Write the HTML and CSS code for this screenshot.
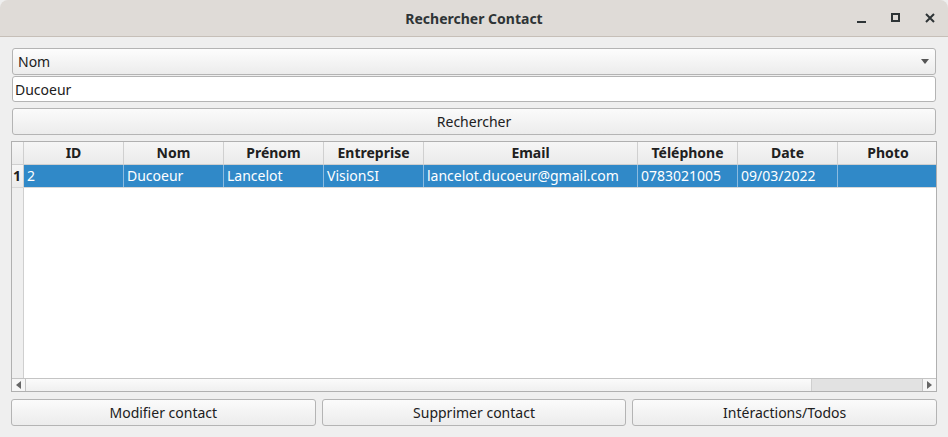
FILE: index.html
```html
<!DOCTYPE html>
<html>
<head>
<meta charset="utf-8">
<link rel="stylesheet" href="styles.css">
</head>
<body>
<div class="window">
  <div class="titlebar">
    <div class="title">Rechercher Contact</div>
    <div class="controls">
      <svg width="12" height="12" viewBox="0 0 12 12"><rect x="1" y="9" width="9" height="2" fill="#2e3436"/></svg>
      <svg width="12" height="12" viewBox="0 0 12 12"><rect x="2" y="2" width="7" height="7" fill="none" stroke="#2e3436" stroke-width="2"/></svg>
      <svg width="12" height="12" viewBox="0 0 12 12"><path d="M2 2 L10 10 M10 2 L2 10" stroke="#2e3436" stroke-width="2"/></svg>
    </div>
  </div>
  <div class="content">
    <div class="combo"><span>Nom</span><svg width="8" height="5" viewBox="0 0 8 5"><path d="M0 0 H8 L4 5 Z" fill="#555"/></svg></div>
    <div class="input">Ducoeur</div>
    <div class="btn search">Rechercher</div>
    <div class="table">
      <div class="thead">
        <div class="corner"></div>
        <div class="th w100">ID</div>
        <div class="th w100">Nom</div>
        <div class="th w100">Prénom</div>
        <div class="th w100">Entreprise</div>
        <div class="th w214">Email</div>
        <div class="th w100">Téléphone</div>
        <div class="th w100">Date</div>
        <div class="th w100 last">Photo</div>
      </div>
      <div class="row">
        <div class="rh">1</div>
        <div class="td w100">2</div>
        <div class="td w100">Ducoeur</div>
        <div class="td w100">Lancelot</div>
        <div class="td w100">VisionSI</div>
        <div class="td w214">lancelot.ducoeur@gmail.com</div>
        <div class="td w100">0783021005</div>
        <div class="td w100">09/03/2022</div>
        <div class="td w100 last"></div>
      </div>
      <div class="empty">
        <div class="rhcol"></div>
        <div class="area"></div>
      </div>
      <div class="hscroll">
        <div class="arrow"><svg width="5" height="8" viewBox="0 0 5 8"><path d="M5 0 V8 L0 4 Z" fill="#666"/></svg></div>
        <div class="track"></div>
        <div class="handle"></div>
        <div class="arrow right"><svg width="5" height="8" viewBox="0 0 5 8"><path d="M0 0 V8 L5 4 Z" fill="#666"/></svg></div>
      </div>
    </div>
    <div class="actions">
      <div class="btn">Modifier contact</div>
      <div class="btn">Supprimer contact</div>
      <div class="btn">Intéractions/Todos</div>
    </div>
  </div>
</div>
</body>
</html>
```
FILE: styles.css
```css
* { box-sizing: border-box; }
html, body { margin: 0; padding: 0; background: #efefef; }
body {
  font-family: "Noto Sans", "Open Sans", sans-serif;
  font-size: 14px;
  color: #202020;
  width: 948px;
  height: 437px;
  overflow: hidden;
}
.window {
  width: 948px;
  height: 437px;
  background: #efefef;
  border-radius: 8px 8px 0 0;
  overflow: hidden;
}
.titlebar {
  height: 37px;
  background: #dfdbd7;
  border-bottom: 1px solid #c6bfb8;
  display: flex;
  align-items: center;
  justify-content: center;
  position: relative;
}
.title {
  font-weight: bold;
  font-size: 14px;
  color: #2e3436;
}
.controls {
  position: absolute;
  right: 12px;
  top: 12px;
  display: flex;
  gap: 22px;
}
.content {
  padding: 11px 11px 0 11px;
}
.combo, .input, .btn {
  height: 26px;
  border: 1px solid #b4b4b4;
  border-radius: 3px;
  display: flex;
  align-items: center;
}
.combo {
  margin: 0 1px;
  background: linear-gradient(#fdfdfd, #ececec);
  justify-content: space-between;
  padding: 0 6px 0 5px;
  height: 27px;
}
.input {
  margin: 1px 1px 0 1px;
  background: #fff;
  padding-left: 2px;
  height: 26px;
}
.btn {
  justify-content: center;
  background: linear-gradient(#fbfbfb, #ececec);
}
.search {
  margin: 6px 1px 0 1px;
  height: 27px;
}
.table {
  margin-top: 6px;
  width: 926px;
  height: 251px;
  border: 1px solid #b0b0b0;
  background: #fff;
  display: flex;
  flex-direction: column;
  overflow: hidden;
}
.thead, .row { display: flex; flex: none; }
.thead { height: 23px; background: linear-gradient(#f6f6f6, #ebebeb); border-bottom: 1px solid #cfcfcf; }
.corner { width: 12px; flex: none; border-right: 1px solid #cfcfcf; }
.th {
  flex: none;
  border-right: 1px solid #d0d0d0;
  font-weight: bold;
  text-align: center;
  line-height: 22px;
}
.th.last { border-right: none; }
.w100 { width: 100px; }
.w214 { width: 214px; }
.row { height: 23px; border-bottom: 1px solid #d8d8d8; }
.rh {
  width: 12px; flex: none;
  background: linear-gradient(#f6f6f6, #ebebeb);
  font-weight: bold;
  border-right: 1px solid #cfcfcf;
  line-height: 22px;
  padding-left: 1px;
}
.td {
  flex: none;
  background: #3089c8;
  color: #fff;
  border-right: 1px solid #8cbbe0;
  line-height: 22px;
  padding-left: 3px;
  white-space: nowrap;
}
.td.last { border-right: none; }
.empty { flex: 1; display: flex; }
.rhcol { width: 12px; background: #efefef; border-right: 1px solid #cfcfcf; }
.area { flex: 1; background: #fff; }
.hscroll {
  height: 13px;
  flex: none;
  display: flex;
  border-top: 1px solid #c4c4c4;
  background: #f6f6f6;
}
.arrow {
  width: 14px;
  display: flex;
  align-items: center;
  justify-content: center;
  border-right: 1px solid #c4c4c4;
}
.arrow.right { border-right: none; border-left: 1px solid #c4c4c4; }
.track { flex: 1; background: linear-gradient(#fbfbfb, #f0f0f0); }
.handle { width: 111px; background: #e2e2e2; border-left: 1px solid #cfcfcf; }
.actions {
  margin-top: 7px;
  display: grid;
  grid-template-columns: 1fr 1fr 1fr;
  gap: 6px;
}
.actions .btn { height: 27px; }
```
